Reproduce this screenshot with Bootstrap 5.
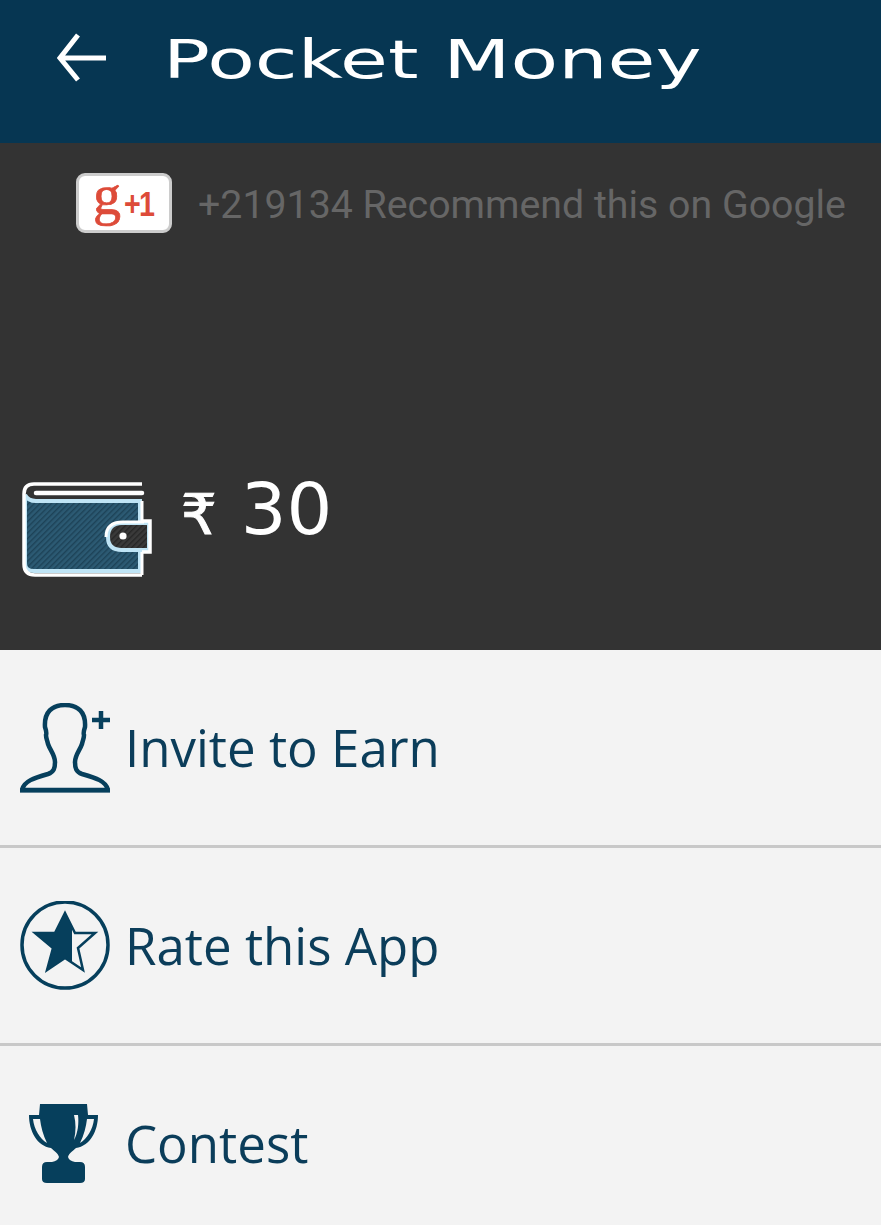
<!DOCTYPE html>
<html lang="en">
<head>
  <meta charset="UTF-8">
  <meta name="viewport" content="width=device-width, initial-scale=1.0">
  <title>Pocket Money</title>
  <link href="https://cdn.jsdelivr.net/npm/bootstrap@5.3.0/dist/css/bootstrap.min.css" rel="stylesheet">
  <style>
    html, body { height: 100%; }
    body { background: #f3f3f3; overflow: hidden; }
    .app-bar { background: #063652; height: 143px; padding: 0 0 0 56px; align-items: flex-start; justify-content: flex-start; flex-wrap: nowrap; }
    .back-icon { width: 50px; height: 50px; margin-top: 33px; flex: none; }
    .app-title { color: #fff; font-family: "DejaVu Sans", sans-serif; font-weight: 400; font-size: 53px; line-height: 1; margin: 33px 0 0 57px; white-space: nowrap; transform-origin: left center; transform: scaleX(1.47); }
    .wallet-panel { background: #333; height: 507px; }
    .plus-row { padding: 30px 0 0 76px; }
    .plus-badge { width: 96px; height: 60px; background: #fff; border: 3px solid #ccc; border-radius: 9px; color: #dd4b39; padding-left: 14px; gap: 3px; flex: none; }
    .plus-g { font-family: "Liberation Serif", serif; font-size: 56px; font-weight: 400; -webkit-text-stroke: .7px #dd4b39; line-height: 50px; margin-top: -16px; }
    .plus-one { font-family: "Liberation Sans", sans-serif; font-weight: 700; font-size: 35px; letter-spacing: -2px; line-height: 1; transform-origin: left center; transform: scaleX(.82); }
    .plus-text { color: #666; font-family: Roboto, sans-serif; font-size: 39.3px; line-height: 1; margin: 5px 0 0 26px; white-space: nowrap; }
    .balance-row { padding: 0 0 73px 22px; }
    .wallet-icon { width: 130px; height: 96px; flex: none; }
    .rupee { color: #fff; font-family: "DejaVu Sans", sans-serif; font-size: 56px; -webkit-text-stroke: 1px #fff; line-height: 1; margin-left: 29px; margin-bottom: 21px; }
    .amount { color: #fff; font-family: "DejaVu Sans", sans-serif; font-size: 72px; line-height: 1; margin-left: 24px; margin-bottom: 32px; }
    .menu-list { border-radius: 0; }
    .menu-item { background: #f3f3f3; border: 0; border-bottom: 3px solid #c8c8c8; border-radius: 0 !important; height: 198px; padding: 0 0 0 20px; color: #0b3d5a; font-family: "Open Sans", sans-serif; font-size: 51px; gap: 15px; }
    .menu-item:last-child { border-bottom: 0; padding-bottom: 3px; }
    .menu-ico { width: 90px; height: 90px; flex: none; }
    .menu-label { line-height: 1; }
  </style>
</head>
<body>
  <nav class="navbar app-bar">
    <svg class="back-icon" viewBox="0 0 50 50" fill="none" stroke="#fff" stroke-width="5">
      <path d="M50 25H4M22 2 4 25l18 22"/>
    </svg>
    <span class="app-title">Pocket Money</span>
  </nav>

  <div class="wallet-panel d-flex flex-column justify-content-between">
    <div class="plus-row d-flex align-items-center">
      <div class="plus-badge d-flex align-items-center">
        <span class="plus-g">g</span><span class="plus-one">+1</span>
      </div>
      <span class="plus-text">+219134 Recommend this on Google</span>
    </div>
    <div class="balance-row d-flex align-items-center">
      <svg class="wallet-icon align-self-end" viewBox="0 0 130 96">
        <defs>
          <pattern id="hatchBlue" width="4" height="4" patternUnits="userSpaceOnUse" patternTransform="rotate(-45)">
            <rect width="4" height="4" fill="#2c5a73"/>
            <rect width="4" height="1.4" fill="#1d4257"/>
          </pattern>
          <pattern id="hatchDark" width="4" height="4" patternUnits="userSpaceOnUse" patternTransform="rotate(-45)">
            <rect width="4" height="4" fill="#3a3a3a"/>
            <rect width="4" height="1.4" fill="#262626"/>
          </pattern>
        </defs>
        <path d="M3 14Q6 20 14 20H118V90H12Q3 90 3 83Z" fill="url(#hatchBlue)" stroke="#bfe4f5" stroke-width="4"/>
        <path d="M120 3H12Q2 3 2 13V83Q2 94 13 94H120" fill="none" stroke="#fff" stroke-width="3.5"/>
        <path d="M120 94V20" stroke="#fff" stroke-width="3"/>
        <path d="M120 12H14" stroke="#fff" stroke-width="4.5" stroke-linecap="round"/>
        <path d="M127 42H100Q86 42 86 56Q86 69 100 69H127Z" fill="url(#hatchDark)" stroke="#bfe4f5" stroke-width="4"/>
        <path d="M120 40H128V71H120" fill="none" stroke="#fff" stroke-width="3.5"/>
        <path d="M122 41H101Q84 41 84 56" fill="none" stroke="#fff" stroke-width="3"/>
        <circle cx="101" cy="55" r="3.6" fill="#fff"/>
      </svg>
      <span class="rupee">₹</span>
      <span class="amount">30</span>
    </div>
  </div>

  <div class="list-group menu-list">
    <a class="list-group-item menu-item d-flex align-items-center">
      <svg class="menu-ico" viewBox="0 0 90 90" fill="none" stroke="#063f5c" stroke-width="4.5">
        <path d="M2 87C4 78 14 75 28 71 34 69 35 65 35 59 35 52 30 47 28 41 27 37 26 35 26 32 27 30 26 27 25 24 24 9 32 2 45 2 58 2 66 9 65 24 64 27 63 30 64 32 64 35 63 37 62 41 60 47 55 52 55 59 55 65 56 69 62 71 76 75 86 78 88 87Z"/>
        <path d="M0 87.5H90" stroke-width="4"/>
        <path d="M72 17H90M81 8V26" stroke-width="4.5"/>
      </svg>
      <span class="menu-label">Invite to Earn</span>
    </a>
    <a class="list-group-item menu-item d-flex align-items-center">
      <svg class="menu-ico" viewBox="0 1 90 90">
        <defs>
          <clipPath id="halfStar"><rect width="52" height="90"/></clipPath>
        </defs>
        <circle cx="45" cy="45" r="43" fill="none" stroke="#063f5c" stroke-width="3.5"/>
        <path d="M45 13 55 33H75L58 48 63 70 45 58 27 70 33 48 15 33H35Z" fill="none" stroke="#063f5c" stroke-width="2.5"/>
        <path d="M45 13 55 33H75L58 48 63 70 45 58 27 70 33 48 15 33H35Z" fill="#063f5c" clip-path="url(#halfStar)"/>
      </svg>
      <span class="menu-label">Rate this App</span>
    </a>
    <a class="list-group-item menu-item d-flex align-items-center">
      <svg class="menu-ico" viewBox="-8 -4 90 90">
        <path d="M12 1H59L60 12H70C70 28 62 43 48 45 44 49 41 50 40 54 41 57 43 58 47 59H52Q57 59 57 64V76Q57 80 52 80H19Q14 80 14 76V64Q14 59 19 59H24C28 58 30 57 31 54 30 50 27 49 23 45 9 43 1 28 1 12H11Z" fill="#063f5c"/>
        <path d="M5 16C6 26 12 36 19 40 15 32 13 24 12 16ZM66 16C65 26 59 36 52 40 56 32 58 24 59 16Z" fill="#f3f3f3"/>
        <path d="M46 12C48 20 48 28 46 37 50 30 51 20 50 12Z" fill="#f3f3f3"/>
      </svg>
      <span class="menu-label">Contest</span>
    </a>
  </div>
  <script src="https://cdn.jsdelivr.net/npm/bootstrap@5.3.0/dist/js/bootstrap.bundle.min.js"></script>
</body>
</html>
